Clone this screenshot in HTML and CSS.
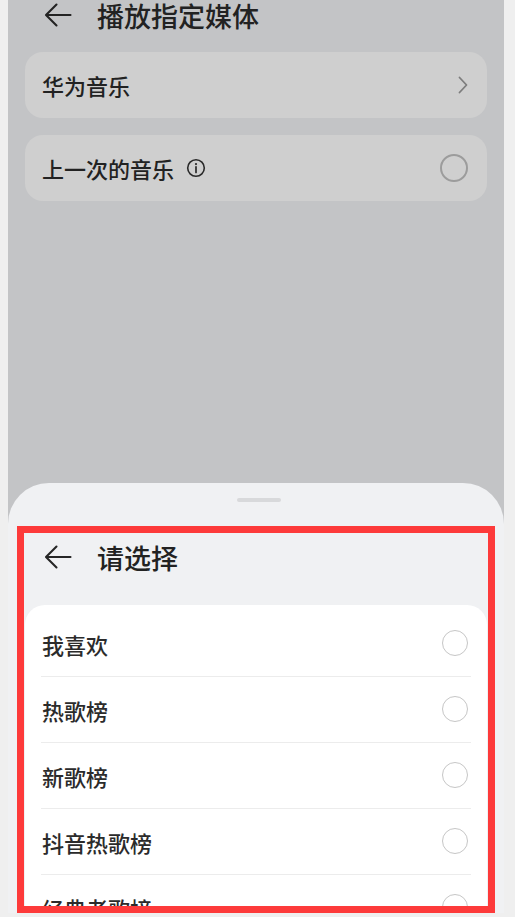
FILE: index.html
```html
<!DOCTYPE html>
<html lang="zh-CN">
<head>
<meta charset="utf-8">
<title>播放指定媒体</title>
<link rel="stylesheet" href="styles.css">
</head>
<body>
<div class="frame">
  <div class="dim">
    <div class="header top-header">
      <svg class="back" viewBox="0 0 28 26" width="28" height="26"><path d="M26.5 13H2.5M12.5 2.5L2 13L12.5 23.5" fill="none" stroke="#232323" stroke-width="2.1" stroke-linecap="round" stroke-linejoin="round"/></svg>
      <span class="title">播放指定媒体</span>
    </div>
    <div class="dim-card first">
      <span class="label">华为音乐</span>
      <svg class="chevron" viewBox="0 0 10 18" width="10" height="18"><path d="M1.5 1.5L8.5 9L1.5 16.5" fill="none" stroke="#7d7d7d" stroke-width="1.8" stroke-linecap="round" stroke-linejoin="round"/></svg>
    </div>
    <div class="dim-card second">
      <span class="label">上一次的音乐</span>
      <svg class="info" viewBox="0 0 20 20" width="20" height="20"><circle cx="10" cy="10" r="8.3" fill="none" stroke="#2a2a2a" stroke-width="1.6"/><circle cx="10" cy="6.1" r="1.1" fill="#2a2a2a"/><path d="M10 8.8V14.4" stroke="#2a2a2a" stroke-width="1.7" stroke-linecap="round"/></svg>
      <span class="spacer"></span>
      <span class="radio dim-radio"></span>
    </div>
  </div>
  <div class="sheet">
    <div class="handle"></div>
    <div class="header sheet-header">
      <svg class="back" viewBox="0 0 28 26" width="28" height="26"><path d="M26.5 13H2.5M12.5 2.5L2 13L12.5 23.5" fill="none" stroke="#262626" stroke-width="2.1" stroke-linecap="round" stroke-linejoin="round"/></svg>
      <span class="title">请选择</span>
    </div>
    <div class="list">
      <div class="row"><span class="item">我喜欢</span><span class="radio"></span></div>
      <div class="row"><span class="item">热歌榜</span><span class="radio"></span></div>
      <div class="row"><span class="item">新歌榜</span><span class="radio"></span></div>
      <div class="row"><span class="item">抖音热歌榜</span><span class="radio"></span></div>
      <div class="row"><span class="item">经典老歌榜</span><span class="radio"></span></div>
    </div>
  </div>
  <div class="annotation"></div>
</div>
</body>
</html>
```

FILE: styles.css
```css
html, body {
  margin: 0;
  padding: 0;
  background: #efefef;
}

body {
  width: 515px;
  height: 917px;
  overflow: hidden;
  font-family: "Noto Sans CJK SC", "Noto Sans", sans-serif;
}

.frame {
  position: relative;
  margin-left: 8px;
  width: 496px;
  height: 913px;
  background: #c3c4c6;
  overflow: hidden;
  display: flex;
  flex-direction: column;
}

.dim {
  flex: none;
}

.header {
  display: flex;
  align-items: center;
  padding-left: 36px;
}

.back {
  display: block;
  flex: none;
}

.title {
  margin-left: 25px;
  font-size: 27px;
  line-height: 1;
  font-weight: 500;
  color: #222;
}

.top-header {
  height: 30px;
}

.dim-card {
  margin: 0 17px;
  height: 66px;
  border-radius: 18px;
  background: #cfcfcf;
  display: flex;
  align-items: center;
  padding: 0 19px 0 17px;
}

.dim-card.first {
  margin-top: 22px;
  justify-content: space-between;
}

.dim-card.second {
  margin-top: 17px;
}

.label {
  font-size: 22px;
  line-height: 1;
  font-weight: 500;
  color: #222;
}

.chevron {
  display: block;
}

.info {
  display: block;
  margin-left: 12px;
}

.spacer {
  flex: 1;
}

.radio {
  flex: none;
  width: 24px;
  height: 24px;
  border-radius: 50%;
  border: 1.8px solid #c6c6c6;
}

.dim-radio {
  border-color: #9c9c9c;
  border-width: 2px;
}

.sheet {
  flex: none;
  margin-top: auto;
  height: 430px;
  background: #f0f1f3;
  border-radius: 41px 41px 0 0;
  display: flex;
  flex-direction: column;
  padding-top: 15px;
  box-sizing: border-box;
  overflow: hidden;
}

.sheet > * {
  flex-shrink: 0;
}

.handle {
  align-self: center;
  width: 44px;
  height: 4px;
  border-radius: 2px;
  background: #d8d9db;
  margin-left: 6px;
}

.sheet-header {
  margin-top: 27px;
  height: 56px;
}

.list {
  margin: 20px 17px 0;
  background: #fff;
  border-radius: 20px;
  padding-top: 6px;
}

.row {
  margin: 0 16px;
  height: 66px;
  display: flex;
  align-items: center;
  justify-content: space-between;
  border-bottom: 1px solid #ececec;
  box-sizing: border-box;
  padding-right: 3px;
}

.row .radio {
  margin-top: -1px;
}

.item {
  font-size: 22px;
  line-height: 1;
  font-weight: 500;
  color: #2b2b2b;
  padding-left: 1px;
}

.annotation {
  position: absolute;
  left: 9px;
  top: 526px;
  width: 478px;
  height: 387px;
  border: 7px solid #fd3a3a;
  box-sizing: border-box;
  pointer-events: none;
}
```
